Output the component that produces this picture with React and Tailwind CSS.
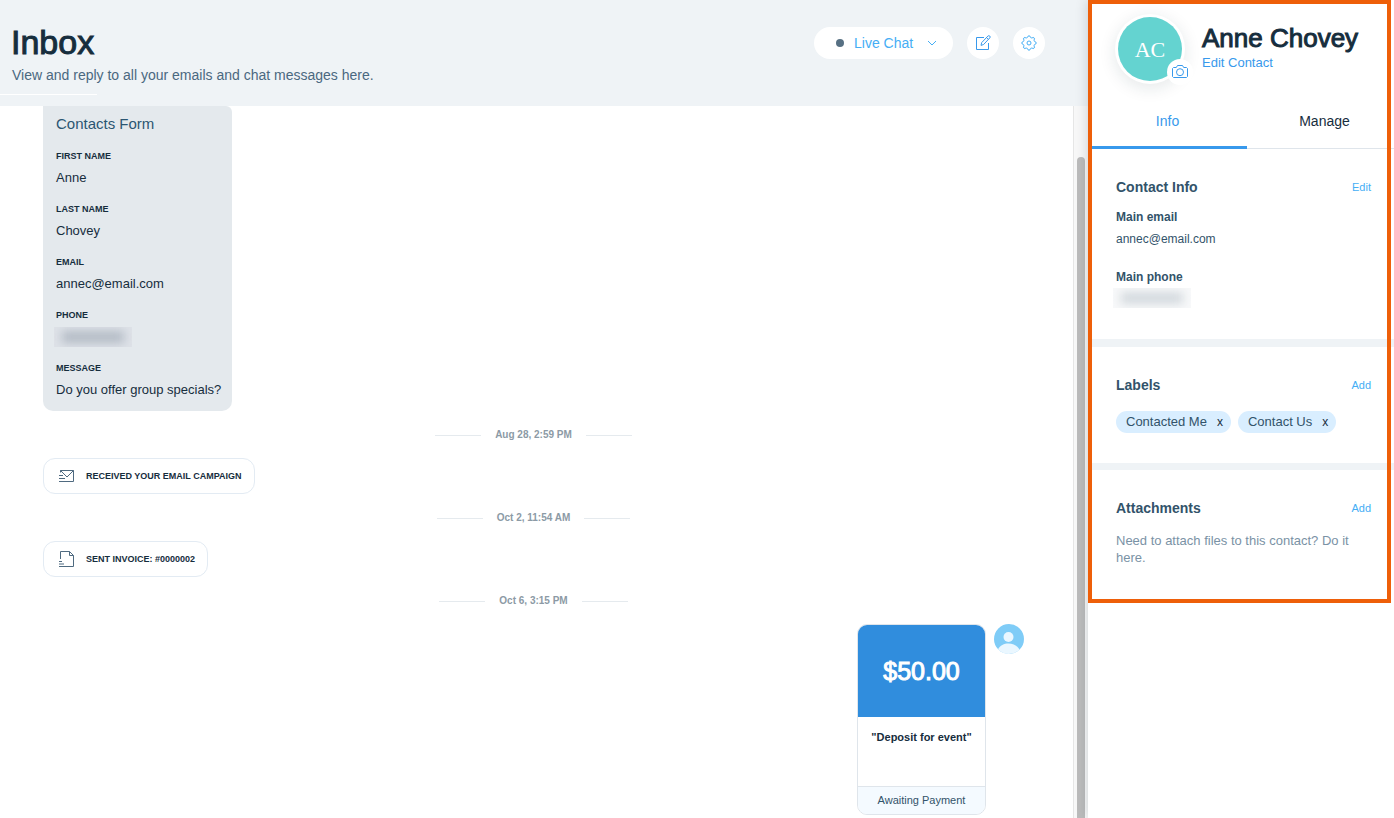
import { useState } from "react";

const messageFields = [
  { label: "FIRST NAME", value: "Anne" },
  { label: "LAST NAME", value: "Chovey" },
  { label: "EMAIL", value: "annec@email.com" },
  { label: "PHONE", value: null },
  { label: "MESSAGE", value: "Do you offer group specials?" },
];

function ComposeIcon() {
  return (
    <svg width="16" height="16" viewBox="0 0 16 16" fill="none" stroke="currentColor">
      <path d="M9 2.5H1.5v12h12V8" />
      <path d="M6 10.4l.7-2.8 6.2-6.500a1.300 1.300 0 0 1 1.900 1.800l-6.200 6.600z" />
      <path d="M11.5 2.6l1.900 1.800" />
    </svg>
  );
}

function GearIcon() {
  return (
    <svg width="16" height="16" viewBox="0 0 16 16" fill="none" stroke="currentColor">
      <path
        strokeLinejoin="round"
        d="M6.6 2.2Q6.8.8 8 .8T9.4 2.2Q9.7 2.9 10.4 2.9L11.1 2.9Q12.2 2 13.1 2.9T13.1 4.9V5.6Q13.1 6.3 13.8 6.6Q15.2 6.8 15.2 8T13.8 9.4Q13.1 9.7 13.1 10.4V11.1Q14 12.2 13.1 13.1T11.1 13.1H10.4Q9.7 13.1 9.4 13.8Q9.2 15.2 8 15.2T6.6 13.8Q6.3 13.1 5.6 13.1H4.9Q3.8 14 2.9 13.1T2.9 11.1V10.4Q2.9 9.7 2.2 9.4Q.8 9.2 .8 8T2.2 6.6Q2.9 6.3 2.9 5.6V4.9Q2 3.8 2.9 2.9T4.9 2.9H5.6Q6.3 2.9 6.6 2.2z"
      />
      <circle cx="8" cy="8" r="2" />
    </svg>
  );
}

function CameraIcon() {
  return (
    <svg width="16" height="14" viewBox="0 0 16 14" fill="none" stroke="currentColor">
      <path d="M1.5 2.5h2.8l1.2-2h5l1.2 2h2.8l1 1v8l-1 1h-13l-1-1v-8z" />
      <circle cx="8" cy="7.2" r="3.5" />
    </svg>
  );
}

function EmailIcon() {
  return (
    <svg width="17" height="14" viewBox="0 0 17 14" fill="none" stroke="currentColor">
      <path d="M2.5 3.5v-2h13v11H1" />
      <path d="M2.5 1.5L9 8l6.5-6.5" />
      <path d="M1 6.5h4M1 9.5h6" />
    </svg>
  );
}

function InvoiceIcon() {
  return (
    <svg width="17" height="18" viewBox="0 0 17 18" fill="none" stroke="currentColor">
      <path d="M2.5 9V1.5h9l4 4v11H1" />
      <path d="M11.5 1.5v4h4" />
      <path d="M1 11.5h3M1 14h5" />
    </svg>
  );
}

function DateDivider({ children }) {
  return (
    <div className="flex items-center justify-center gap-[14px] pt-4 pb-[15px]">
      <span className="h-px w-[46px] bg-[#e5eaee]" />
      <span className="text-[10px] leading-4 font-bold text-[#8c9aa5]">{children}</span>
      <span className="h-px w-[46px] bg-[#e5eaee]" />
    </div>
  );
}

function Activity({ icon, children }) {
  return (
    <div className="flex h-9 w-fit items-center rounded-xl border border-[#e3ebf3] pr-3 pl-[14px]">
      <span className="w-7 text-[#4f6a80]">{icon}</span>
      <span className="text-[9px] leading-4 font-bold text-[#162d3d]">{children}</span>
    </div>
  );
}

function SectionTitle({ title, action }) {
  return (
    <div className="flex h-5 items-center justify-between">
      <h2 className="text-sm leading-5 font-bold text-[#32536a]">{title}</h2>
      <button type="button" className="text-[11px] leading-5 text-[#45aef5]">
        {action}
      </button>
    </div>
  );
}

function Label({ name, onRemove }) {
  return (
    <span className="flex h-[22px] items-center gap-[10px] rounded-full bg-[#d9eeff] pr-2 pl-[10px] text-[13px] text-[#32536a]">
      {name}
      <button type="button" aria-label={`Remove ${name}`} onClick={onRemove} className="text-xs leading-4 text-[#162d3d]">
        x
      </button>
    </span>
  );
}

function ContactPanel() {
  const [tab, setTab] = useState("info");
  const [labels, setLabels] = useState(["Contacted Me", "Contact Us"]);

  return (
    <aside className="relative z-10 w-[306px] shrink-0 bg-white shadow-[0_0_12px_rgba(22,45,61,0.2)]">
      <div className="relative">
        <div className="flex h-[98px] pt-[17px] pl-[30px]">
          <div className="relative h-16 w-16 shrink-0">
            <div className="flex h-16 w-16 items-center justify-center rounded-full bg-[#64d3d0] font-['Liberation_Serif',serif] text-[22px] text-white shadow-[0_0_0_3px_#fff,0_4px_16px_4px_rgba(22,45,61,0.1)]">
              AC
            </div>
            <button
              type="button"
              aria-label="Change photo"
              className="absolute -right-[11px] -bottom-[4px] flex h-[26px] w-[26px] items-center justify-center rounded-full bg-white text-[#3899ec]"
            >
              <CameraIcon />
            </button>
          </div>
          <div className="pt-[6px] pl-5">
            <h2 className="text-[26px] leading-[30px] text-[#162d3d] [-webkit-text-stroke:1px_#162d3d]">Anne Chovey</h2>
            <a href="#edit" className="block text-[13px] leading-5 text-[#3899ec]">
              Edit Contact
            </a>
          </div>
        </div>

        <div className="flex h-[51px] border-b border-[#dfe5eb] text-sm">
          <button
            type="button"
            onClick={() => setTab("info")}
            className={`-mb-px w-[159px] border-b-[3px] pb-[2px] ${tab === "info" ? "border-[#3899ec] text-[#3899ec]" : "border-transparent text-[#162d3d]"}`}
          >
            Info
          </button>
          <button
            type="button"
            onClick={() => setTab("manage")}
            className={`-mb-px flex-1 border-b-[3px] pb-[2px] pl-2 ${tab === "manage" ? "border-[#3899ec] text-[#3899ec]" : "border-transparent text-[#162d3d]"}`}
          >
            Manage
          </button>
        </div>

        <section className="border-b-8 border-[#eff3f6] pt-7 pr-[23px] pb-[31px] pl-7 text-[#32536a]">
          <SectionTitle title="Contact Info" action="Edit" />
          <h3 className="mt-3 text-xs leading-4 font-bold">Main email</h3>
          <p className="mt-[6px] text-xs leading-4">annec@email.com</p>
          <h3 className="mt-[22px] text-xs leading-4 font-bold">Main phone</h3>
          <div className="mt-[3px] -ml-[3px] h-5 w-[78px] overflow-hidden bg-[#f8f9fa] px-2 py-1">
            <div className="h-3 bg-[#d3d9de] blur-[5px]" />
          </div>
        </section>

        <section className="border-b-[7px] border-[#eff3f6] pt-7 pr-[23px] pb-[30px] pl-7">
          <SectionTitle title="Labels" action="Add" />
          <div className="mt-4 flex gap-[7px]">
            {labels.map((name) => (
              <Label key={name} name={name} onRemove={() => setLabels(labels.filter((l) => l !== name))} />
            ))}
          </div>
        </section>

        <section className="pt-7 pr-[23px] pb-[37px] pl-7">
          <SectionTitle title="Attachments" action="Add" />
          <p className="mt-[14px] text-[13px] leading-[17px] text-[#7a92a5]">
            Need to attach files to this contact? Do it here.
          </p>
        </section>

        {/* highlight frame */}
        <div className="pointer-events-none absolute inset-y-0 right-[3px] left-0 border-4 border-[#ee5f09]" />
      </div>
    </aside>
  );
}

export default function App() {
  return (
    <div className="flex h-screen overflow-hidden bg-white font-['Liberation_Sans',Arial,sans-serif]">
      <main className="flex min-w-0 flex-1 flex-col">
        <header className="flex h-[106px] shrink-0 justify-between bg-[#eff3f6] pr-[43px]">
          <div className="pt-[22px]">
            <h1 className="pl-[11px] text-[34px] leading-10 text-[#162d3d] [-webkit-text-stroke:1px_#162d3d]">Inbox</h1>
            <p className="mt-[3px] pl-3 text-sm leading-5 text-[#4a6880]">
              View and reply to all your emails and chat messages here.
            </p>
            <div className="mt-[9px] h-px w-[97px] bg-white" />
          </div>
          <div className="flex gap-[14px] pt-[27px]">
            <button type="button" className="flex h-8 w-[139px] items-center rounded-full bg-white pl-[22px] text-sm text-[#45aef5]">
              <span className="mr-[10px] h-2 w-2 rounded-full bg-[#577083]" />
              Live Chat
              <svg className="ml-[14px]" width="10" height="6" viewBox="0 0 10 6" fill="none" stroke="currentColor">
                <path d="M1 1l4 4 4-4" />
              </svg>
            </button>
            <button type="button" aria-label="Compose" className="flex h-8 w-8 items-center justify-center rounded-full bg-white text-[#3899ec]">
              <ComposeIcon />
            </button>
            <button type="button" aria-label="Settings" className="flex h-8 w-8 items-center justify-center rounded-full bg-white text-[#45aef5]">
              <GearIcon />
            </button>
          </div>
        </header>

        <div className="flex min-h-0 flex-1">
          <div className="min-w-0 flex-1 overflow-hidden pr-[49px] pl-[43px]">
            <div className="w-[189px] rounded-tr-md rounded-b-[10px] bg-[#e4e9ed] px-[13px] pt-2 pb-[13px] text-[#162d3d]">
              <h2 className="text-[15px] leading-5 text-[#2b5672]">Contacts Form</h2>
              <dl className="-mt-px">
                {messageFields.map(({ label, value }) => (
                  <div key={label} className="pt-[17px]">
                    <dt className="text-[9px] leading-3 font-bold">{label}</dt>
                    <dd className="mt-2 h-4 text-[13px] leading-4 whitespace-nowrap">
                      {value ?? (
                        <div className="-mt-[2px] -ml-[2px] inline-block h-5 w-[78px] overflow-hidden bg-[#dee2e8] px-2 py-1">
                          <div className="h-3 bg-[#b3bbc5] blur-[5px]" />
                        </div>
                      )}
                    </dd>
                  </div>
                ))}
              </dl>
            </div>

            <DateDivider>Aug 28, 2:59 PM</DateDivider>
            <Activity icon={<EmailIcon />}>RECEIVED YOUR EMAIL CAMPAIGN</Activity>
            <DateDivider>Oct 2, 11:54 AM</DateDivider>
            <Activity icon={<InvoiceIcon />}>SENT INVOICE: #0000002</Activity>
            <DateDivider>Oct 6, 3:15 PM</DateDivider>

            <div className="flex justify-end gap-2">
              <div className="w-[129px] overflow-hidden rounded-[10px] border border-[#dfe5eb] text-center">
                <div className="h-[92px] bg-[#308ddd] text-[25px] leading-[92px] text-white [-webkit-text-stroke:1px_#fff]">
                  $50.00
                </div>
                <p className="h-[69px] pt-3 text-[11px] leading-4 font-bold text-[#162d3d]">"Deposit for event"</p>
                <p className="border-t border-[#dfe5eb] bg-[#f4faff] text-[11px] leading-[27px] text-[#32536a]">
                  Awaiting Payment
                </p>
              </div>
              <svg width="30" height="30" viewBox="0 0 30 30">
                <circle cx="15" cy="15" r="15" fill="#7fccf7" />
                <circle cx="14.5" cy="13" r="5" fill="#eaf7ff" />
                <path d="M4 25.2C6 21.5 10 19.5 14.5 19.5S23.5 21.5 25.5 25.7A15 15 0 0 1 4 25.2z" fill="#eaf7ff" />
              </svg>
            </div>
          </div>

          {/* scrollbar */}
          <div className="flex w-[15px] border-l border-[#e6e6e6] bg-[#f8f8f8] pt-[51px] pl-[3px]">
            <div className="w-2 rounded-t-full bg-[#bcbcbc]" />
          </div>
        </div>
      </main>
      <ContactPanel />
    </div>
  );
}
